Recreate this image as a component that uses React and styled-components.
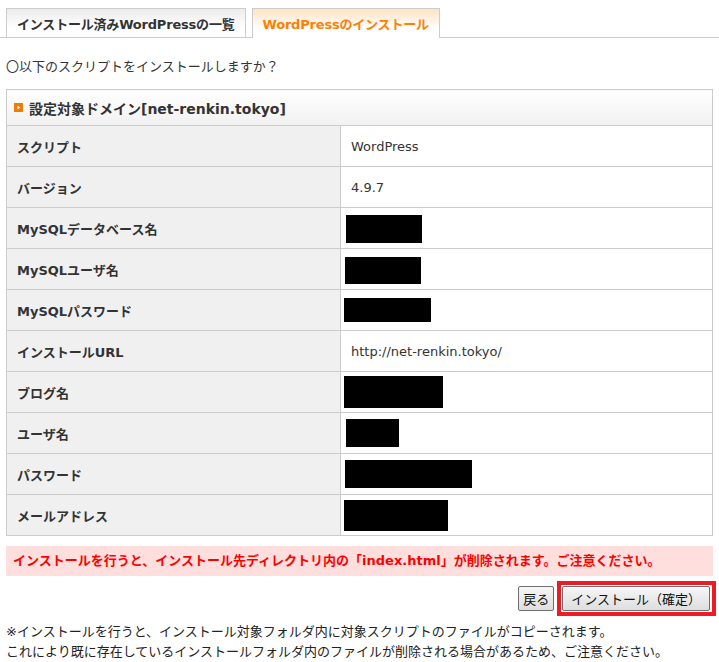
import React from "react";
import styled, { createGlobalStyle } from "styled-components";

const GlobalStyle = createGlobalStyle`
  body {
    margin: 0;
    background: #fff;
    font-family: "DejaVu Sans", "Noto Sans CJK JP", sans-serif;
    font-size: 13px;
    color: #333;
  }
`

const Page = styled.div`
  padding-top: 8px;
  width: 719px;
`

const TabBar = styled.div`
  display: flex;
  gap: 6px;
  padding-left: 6px;
  border-bottom: 1px solid #ccc;
  height: 29px;
`

const Tab = styled.div`
  display: flex;
  align-items: center;
  height: 28px;
  padding: 0 10px;
  border: 1px solid #ccc;
  border-bottom: none;
  font-weight: bold;
  letter-spacing: -0.2px;
  color: ${props => (props.active ? "#ff8000" : "#333")};
  background: ${props =>
    props.active
      ? "linear-gradient(#ffe3c4, #fff 70%)"
      : "linear-gradient(#ececec, #fff 70%)"};
  height: ${props => (props.active ? "29px" : "28px")};
  position: relative;
`

const Body = styled.div`
  padding: 0 6px;
`

const Question = styled.p`
  margin: 19px 0 12px;
  line-height: 20px;
`

const Table = styled.table`
  width: 707px;
  border-collapse: collapse;
  border: 1px solid #ccc;
`

const HeadCell = styled.th`
  height: 35px;
  padding: 0 0 0 7px;
  text-align: left;
  font-size: 14px;
  font-weight: bold;
  border: 1px solid #ccc;
  background: linear-gradient(#fff, #f1f1f1);
`

const HeadTitle = styled.span`
  display: flex;
  align-items: center;
  gap: 6px;
`

const Label = styled.th`
  width: 313px;
  height: 40px;
  padding: 0 10px;
  text-align: left;
  font-weight: bold;
  background: #f0f0f0;
  border: 1px solid #ccc;
`

const Value = styled.td`
  height: 40px;
  padding: 0 10px;
  border: 1px solid #ccc;
  background: #fff;
`

const Redacted = styled.span`
  display: block;
  background: #000;
  width: ${props => props.w}px;
  height: ${props => props.h}px;
  margin-left: ${props => props.x - 351}px;
  margin-top: ${props => props.dy}px;
`

const Warning = styled.div`
  margin-top: 10px;
  height: 30px;
  line-height: 30px;
  padding-left: 7px;
  background: #ffdede;
  color: #ff0000;
  font-weight: bold;
`

const Actions = styled.div`
  display: flex;
  justify-content: flex-end;
  align-items: center;
  gap: 3px;
  margin-top: 5px;
  margin-right: -3px;
`

const Button = styled.button`
  height: 25px;
  padding: 0 ${props => (props.wide ? "8px" : "4px")};
  font-family: "DejaVu Sans", "Noto Sans CJK JP", sans-serif;
  font-size: 13px;
  color: #111;
  border: 1px solid #707070;
  border-radius: 2px;
  background: linear-gradient(#f6f6f6, #dedede);
`

const Marker = styled.span`
  display: inline-flex;
  padding: 1px 2px 1px 1px;
  border: 4px solid #ed1c24;
`

const Note = styled.div`
  margin-top: 6px;
  line-height: 20px;
  color: #222;
`

const OrangeIcon = () => (
  <svg width="9" height="9" viewBox="0 0 9 9">
    <rect width="9" height="9" fill="#f07c00" />
    <path d="M3.5 2.5 L6.2 4.5 L3.5 6.5 Z" fill="#fff" />
  </svg>
);

const rows = [
  { label: "スクリプト", value: "WordPress" },
  { label: "バージョン", value: "4.9.7" },
  { label: "MySQLデータベース名", box: { x: 346, w: 76, h: 28, dy: 2 } },
  { label: "MySQLユーザ名", box: { x: 345, w: 76, h: 27, dy: 2 } },
  { label: "MySQLパスワード", box: { x: 344, w: 87, h: 24, dy: 0 } },
  { label: "インストールURL", value: "http://net-renkin.tokyo/" },
  { label: "ブログ名", box: { x: 344, w: 99, h: 32, dy: 0 } },
  { label: "ユーザ名", box: { x: 346, w: 53, h: 28, dy: 0 } },
  { label: "パスワード", box: { x: 345, w: 127, h: 28, dy: 0 } },
  { label: "メールアドレス", box: { x: 344, w: 104, h: 31, dy: 0 } }
];

export default function App() {
  return (
    <Page>
      <GlobalStyle />
      <TabBar>
        <Tab>インストール済みWordPressの一覧</Tab>
        <Tab active>WordPressのインストール</Tab>
      </TabBar>
      <Body>
        <Question>〇以下のスクリプトをインストールしますか？</Question>
        <Table>
          <thead>
            <tr>
              <HeadCell colSpan={2}>
                <HeadTitle>
                  <OrangeIcon />
                  設定対象ドメイン[net-renkin.tokyo]
                </HeadTitle>
              </HeadCell>
            </tr>
          </thead>
          <tbody>
            {rows.map((row, i) => (
              <tr key={i}>
                <Label>{row.label}</Label>
                <Value>
                  {row.box ? (
                    <Redacted x={row.box.x} w={row.box.w} h={row.box.h} dy={row.box.dy} />
                  ) : (
                    row.value
                  )}
                </Value>
              </tr>
            ))}
          </tbody>
        </Table>
        <Warning>
          インストールを行うと、インストール先ディレクトリ内の「index.html」が削除されます。ご注意ください。
        </Warning>
        <Actions>
          <Button>戻る</Button>
          <Marker>
            <Button wide>インストール（確定）</Button>
          </Marker>
        </Actions>
        <Note>
          ※インストールを行うと、インストール対象フォルダ内に対象スクリプトのファイルがコピーされます。
          <br />
          これにより既に存在しているインストールフォルダ内のファイルが削除される場合があるため、ご注意ください。
        </Note>
      </Body>
    </Page>
  );
}
